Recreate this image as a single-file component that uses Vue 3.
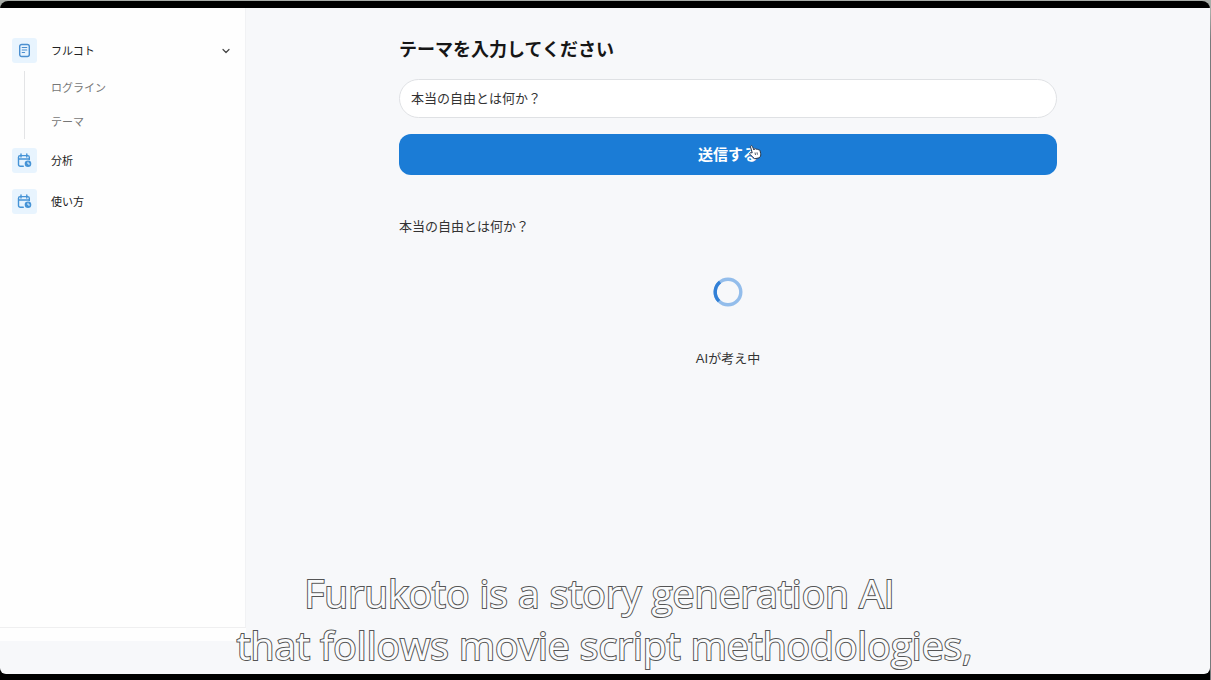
<script setup>
import { ref } from 'vue'

const theme = ref('本当の自由とは何か？')
const submitted = ref('本当の自由とは何か？')
const open = ref(true)
const children = ['ログライン', 'テーマ']
const links = ['分析', '使い方']
</script>

<template>
  <div class="desktop">
    <div class="window">
      <div class="screen">
        <aside class="sidebar">
          <nav class="nav">
            <button class="item" type="button" :aria-expanded="open" @click="open = !open">
              <span class="badge">
                <svg width="13" height="15" viewBox="0 0 13 15" fill="none" stroke="#4a8fd0" stroke-width="1.4" stroke-linecap="round">
                  <rect x="1.7" y="1.5" width="9.6" height="12" rx="2" />
                  <path d="M4.2 4.5h4.6M4.2 7h4.6M4.2 9.5h2.4" stroke-width="1.1" />
                </svg>
              </span>
              <span class="label">フルコト</span>
              <svg class="chevron" width="8" height="8" viewBox="0 0 8 8" fill="none" stroke="#444" stroke-width="1.2" stroke-linecap="round" stroke-linejoin="round">
                <path d="M1 2.5 4 5.5 7 2.5" />
              </svg>
            </button>
            <div v-if="open" class="children">
              <a v-for="child in children" :key="child" class="child" href="#">{{ child }}</a>
            </div>
            <a v-for="link in links" :key="link" class="item link" href="#">
              <span class="badge">
                <svg width="15" height="15" viewBox="0 0 15 15" fill="none" stroke="#4593d6" stroke-width="1.4" stroke-linecap="round" stroke-linejoin="round">
                  <path d="M6.3 13.2H3.3a1.8 1.8 0 0 1-1.8-1.8V4.2a1.6 1.6 0 0 1 1.6-1.6h7.6a1.6 1.6 0 0 1 1.6 1.6v2.4" />
                  <path d="M4 1v3M9.8 1v3M1.7 6h10.4" />
                  <circle cx="11" cy="10.8" r="3.3" fill="#4593d6" stroke="none" />
                  <path d="M11 9.2v1.8h1.5" stroke="#e6f3fd" stroke-width="1" />
                </svg>
              </span>
              <span class="label">{{ link }}</span>
            </a>
          </nav>
          <div class="sidebar-foot"></div>
        </aside>

        <main class="main">
          <form class="content" @submit.prevent="submitted = theme">
            <label class="title" for="theme">テーマを入力してください</label>
            <input id="theme" v-model="theme" class="field" type="text" />
            <button class="submit" type="submit">
              <span class="submit-text">送信する
                <svg class="pointer" width="14" height="16" viewBox="0 0 14 16" fill="#fff" stroke="#26364a" stroke-width="1" stroke-linejoin="round">
                  <path d="M4.2 8.8 2.6 3.1C2.2 1.6 3.8 1 4.4 2.4L6 6l.2-1c.8-.7 1.6-.4 1.9.4.7-.6 1.6-.4 1.9.5.8-.5 1.8-.1 2 .8l.7 2.9c.4 2-.4 3.2-1.5 4.2l-4.6 1c-1-1.5-2.7-2.3-4.6-4.5-.9-1.2.6-2 1.5-1.5Z" />
                  <path d="M7 8.5l.5 2.5M9 8.3l.4 2.4" stroke-width=".8" />
                </svg>
              </span>
            </button>
            <p class="question">{{ submitted }}</p>
            <div class="loading" role="status">
              <svg width="30" height="30" viewBox="0 0 30 30" fill="none" stroke-width="3.4">
                <circle cx="15" cy="15" r="12.8" stroke="#93bdeb" />
                <path d="M7 5A12.8 12.8 0 0 0 6 24.1" stroke="#3280d6" />
              </svg>
              <span>AIが考え中</span>
            </div>
          </form>
        </main>
      </div>
    </div>
    <p class="caption">Furukoto is a story generation AI&nbsp;<br />that follows movie script methodologies,</p>
  </div>
</template>

<style>
body {
  margin: 0;
}
</style>

<style scoped>
.desktop {
  position: relative;
  box-sizing: border-box;
  min-height: 100vh;
  display: flex;
  padding: 1px 1px 0 0;
  background: linear-gradient(to bottom, #a9ada9 0, #a9ada9 12px, #777a7c 40px, #777a7c 100%);
  font-family: "Liberation Sans", "Noto Sans CJK JP", sans-serif;
  color: #333;
}
.window {
  flex: 1;
  display: flex;
  padding: 7px 0 6px;
  background: #000;
  border-radius: 8px 8px 0 0;
}
.screen {
  flex: 1;
  display: flex;
  background: #f7f8fa;
  border-radius: 0 0 6px 6px;
  overflow: hidden;
}
.sidebar {
  flex: none;
  width: 246px;
  display: flex;
  flex-direction: column;
  padding-bottom: 33px;
}
.nav {
  flex: 1;
  box-sizing: border-box;
  display: flex;
  flex-direction: column;
  padding: 30px 12px 0;
  background: #fefefe;
  border-right: 1px solid #f1f2f4;
  border-bottom: 1px solid #efeff0;
}
.sidebar-foot {
  height: 13px;
  background: #fefefe;
}
.item {
  display: flex;
  align-items: center;
  gap: 14px;
  width: 100%;
  padding: 0;
  border: 0;
  background: none;
  color: #222;
  font: 400 11px/24px "Liberation Sans", "Noto Sans CJK JP", sans-serif;
  text-align: left;
  text-decoration: none;
}
.badge {
  flex: none;
  display: grid;
  place-items: center;
  width: 25px;
  height: 25px;
  border-radius: 3px;
  background: #e8f4fe;
}
.label {
  flex: 1;
}
.chevron {
  margin-right: 3px;
}
.children {
  display: flex;
  flex-direction: column;
  margin: 8px 0 9px 12px;
  border-left: 1px solid #e3e4e6;
}
.child {
  padding-left: 26px;
  color: #777;
  font-size: 11px;
  line-height: 34px;
  text-decoration: none;
}
.link + .link {
  margin-top: 16px;
}
.main {
  flex: 1;
  padding: 29px 24px;
}
.content {
  display: flex;
  flex-direction: column;
  max-width: 658px;
  margin: 0 auto;
}
.title {
  color: #161616;
  font-size: 18px;
  font-weight: 700;
  line-height: 26px;
}
.field {
  box-sizing: border-box;
  width: 100%;
  height: 39px;
  margin-top: 16px;
  padding: 0 11px 2px;
  border: 1px solid #dfe1e4;
  border-radius: 20px;
  background: #fff;
  color: #333;
  font: 13px "Liberation Sans", "Noto Sans CJK JP", sans-serif;
  outline: none;
}
.submit {
  height: 41px;
  margin-top: 16px;
  padding: 0 0 2px;
  border: 0;
  border-radius: 12px;
  background: #1b7cd6;
  color: #fff;
  font: 700 15px "Liberation Sans", "Noto Sans CJK JP", sans-serif;
}
.submit-text {
  position: relative;
}
.pointer {
  position: absolute;
  right: -4px;
  top: -2px;
}
.question {
  margin: 42px 0 0;
  font-size: 13px;
  line-height: 20px;
}
.loading {
  display: flex;
  flex-direction: column;
  align-items: center;
  gap: 42px;
  margin-top: 40px;
  font-size: 13px;
  line-height: 20px;
}
.caption {
  position: absolute;
  left: 0;
  right: 2px;
  bottom: 9px;
  margin: 0;
  color: #fafbfc;
  font-family: "Open Sans", "Noto Sans", sans-serif;
  font-size: 39px;
  line-height: 52px;
  text-align: center;
  -webkit-text-stroke: 2px #555;
  paint-order: stroke fill;
}
</style>
